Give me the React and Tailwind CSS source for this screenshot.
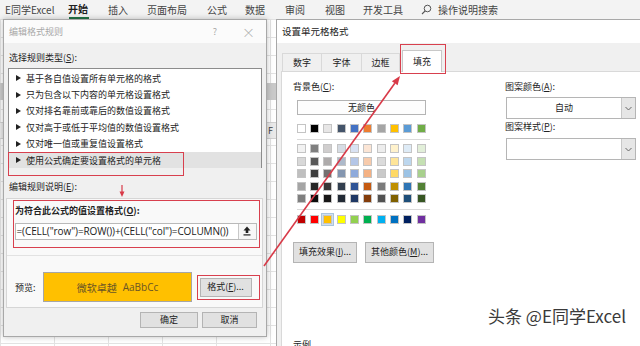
import React from 'react';

const themeRow = ['bg-[#ffffff]', 'bg-[#000000]', 'bg-[#e7e6e6]', 'bg-[#44546a]', 'bg-[#4472c4]', 'bg-[#ed7d31]', 'bg-[#a5a5a5]', 'bg-[#ffc000]', 'bg-[#5b9bd5]', 'bg-[#70ad47]'];

const tintRows = [
  ['bg-[#f2f2f2]', 'bg-[#7f7f7f]', 'bg-[#d0cece]', 'bg-[#d6dce4]', 'bg-[#d9e2f3]', 'bg-[#fbe5d5]', 'bg-[#ededed]', 'bg-[#fff2cc]', 'bg-[#deebf6]', 'bg-[#e2efd9]'],
  ['bg-[#d8d8d8]', 'bg-[#595959]', 'bg-[#aeabab]', 'bg-[#adb9ca]', 'bg-[#b4c6e7]', 'bg-[#f7cbac]', 'bg-[#dbdbdb]', 'bg-[#fee599]', 'bg-[#bdd7ee]', 'bg-[#c5e0b3]'],
  ['bg-[#bfbfbf]', 'bg-[#3f3f3f]', 'bg-[#757070]', 'bg-[#8496b0]', 'bg-[#8eaadb]', 'bg-[#f4b183]', 'bg-[#c9c9c9]', 'bg-[#ffd965]', 'bg-[#9cc3e5]', 'bg-[#a8d08d]'],
  ['bg-[#a5a5a5]', 'bg-[#262626]', 'bg-[#3a3838]', 'bg-[#323f4f]', 'bg-[#2f5496]', 'bg-[#c55a11]', 'bg-[#7b7b7b]', 'bg-[#bf8f00]', 'bg-[#2e75b5]', 'bg-[#538135]'],
  ['bg-[#7f7f7f]', 'bg-[#0c0c0c]', 'bg-[#171616]', 'bg-[#222a35]', 'bg-[#1f3864]', 'bg-[#833c0b]', 'bg-[#525252]', 'bg-[#7f6000]', 'bg-[#1e4e79]', 'bg-[#375623]'],
];

const standardRow = ['bg-[#c00000]', 'bg-[#ff0000]', 'bg-[#ffc000]', 'bg-[#ffff00]', 'bg-[#92d050]', 'bg-[#00b050]', 'bg-[#00b0f0]', 'bg-[#0070c0]', 'bg-[#002060]', 'bg-[#7030a0]'];

const rules = [
  '基于各自值设置所有单元格的格式',
  '只为包含以下内容的单元格设置格式',
  '仅对排名靠前或靠后的数值设置格式',
  '仅对高于或低于平均值的数值设置格式',
  '仅对唯一值或重复值设置格式',
  '使用公式确定要设置格式的单元格',
];

const ribbonTabs = [
  { label: 'E同学Excel', w: 'w-[68px] pl-[5px]' },
  { label: '开始', w: 'w-[40px]', active: true },
  { label: '插入', w: 'w-[39px]' },
  { label: '页面布局', w: 'w-[60px]' },
  { label: '公式', w: 'w-[38px]' },
  { label: '数据', w: 'w-[40px]' },
  { label: '审阅', w: 'w-[40px]' },
  { label: '视图', w: 'w-[38px]' },
  { label: '开发工具', w: 'w-[58px]' },
];

const Swatch = ({ color, selected }) => (
  <div className={`w-[13.33px] h-[13px] flex items-center justify-center ${selected ? 'bg-[#cfe0f0] border border-[#a9c4de]' : ''}`}>
    <div className={`w-[9px] h-[9px] border border-[#c4c4c4] ${color}`} />
  </div>
);

const SwatchRow = ({ colors, selectedIndex }) => (
  <div className="flex">
    {colors.map((c, i) => (
      <Swatch key={i} color={c} selected={i === selectedIndex} />
    ))}
  </div>
);

const Triangle = () => (
  <svg width="5" height="6" viewBox="0 0 5 6" className="shrink-0">
    <path d="M0 0 L5 3 L0 6 Z" fill="#222" />
  </svg>
);

const Chevron = () => (
  <svg width="7" height="5" viewBox="0 0 7 5">
    <path d="M0.5 1 L3.5 4 L6.5 1" fill="none" stroke="#666" strokeWidth="1" />
  </svg>
);

const Dropdown = ({ value }) => (
  <div className="w-[130px] h-[22px] bg-white border border-[#b5b5b5] flex">
    <div className="flex-1 flex items-center justify-center text-[9px] text-[#222]">{value}</div>
    <div className="w-[14px] bg-[#e6e6e6] border-l border-[#c8c8c8] flex items-center justify-center">
      <Chevron />
    </div>
  </div>
);

const Btn = ({ className, children }) => (
  <div className={`bg-[#e1e1e1] border border-[#b4b4b4] flex items-center justify-center text-[9px] text-[#222] ${className}`}>
    {children}
  </div>
);

function LeftDialog() {
  return (
    <div className="absolute left-[3px] top-[19px] w-[264px] h-[318px] bg-[#f0f0f0] border border-[#a8a8a8] shadow-[0_0_6px_rgba(0,0,0,0.25)] flex flex-col">
      {/* title bar */}
      <div className="h-[23px] bg-[#fbfbfb] flex items-center text-[9px] text-[#a8a8a8] shrink-0">
        <span className="pl-[5px]">编辑格式规则</span>
        <span className="ml-auto w-[10px] text-center">?</span>
        <span className="ml-[22px] mr-[12px] w-[12px] text-center text-[13px] leading-none font-light">×</span>
      </div>

      <div className="flex flex-col text-[9px] text-[#222]">
        <div className="mt-[9px] ml-[5px] leading-[12px]">选择规则类型(<u>S</u>):</div>

        <div className="mt-[4px] ml-[4px] w-[254px] h-[100px] bg-white border border-[#8c8c8c] pt-[1px]">
          {rules.map((r, i) => (
            <div key={r} className={`h-[16.4px] flex items-center pl-[7px] ${i === rules.length - 1 ? 'bg-[#e2e2e2]' : ''}`}>
              <Triangle />
              <span className="ml-[5px] leading-none">{r}</span>
            </div>
          ))}
        </div>

        <div className="mt-[13px] ml-[5px] leading-[12px]">编辑规则说明(<u>E</u>):</div>

        <div className="mt-[5px] ml-[2px] w-[257px] h-[110px] bg-[#f9f9f9] border border-[#d6d6d6] flex flex-col">
          <div className="mt-[1px] ml-[6px] w-[247px] h-[48px] border-[1.5px] border-[#d8404e] flex flex-col">
            <div className="pt-[3.5px] pl-[1px] leading-[12px] font-bold">为符合此公式的值设置格式(<u>O</u>):</div>
            <div className="mt-[6px] ml-[0.5px] w-[242px] h-[17px] bg-white border border-[#b9b9b9] flex">
              <div className="flex-1 flex items-center pl-[1px] text-[10px] text-[#222] font-['Open_Sans',sans-serif] tracking-[-0.1px] whitespace-nowrap overflow-hidden">
                =(CELL("row")=ROW())+(CELL("col")=COLUMN())
              </div>
              <div className="w-[18px] border-l border-[#c8c8c8] bg-[#f7f7f7] flex items-center justify-center">
                <svg width="8" height="10" viewBox="0 0 8 10">
                  <path d="M4 0.5 L7.5 4.5 H5.3 V7 H2.7 V4.5 H0.5 Z" fill="#222" />
                  <rect x="0.5" y="8.3" width="7" height="1.2" fill="#222" />
                </svg>
              </div>
            </div>
          </div>

          <div className="mt-[7px] h-px bg-[#e2e2e2]" />

          <div className="mt-[16px] flex items-center pl-[8px]">
            <span className="w-[28px] leading-none">预览:</span>
            <div className="w-[149px] h-[30px] bg-[#ffc000] border border-[#a6a6a6] flex items-center justify-center text-[10px] text-[#6a5526]">
              <span>微软卓越</span>
              <span className="ml-[6px] font-['Open_Sans',sans-serif]">AaBbCc</span>
            </div>
            <div className="ml-[5px] w-[63px] h-[25px] border-[1.5px] border-[#d8404e] flex items-center pl-[1.5px]">
              <Btn className="w-[52px] h-[19px]">格式(<u>F</u>)...</Btn>
            </div>
          </div>
        </div>

        <div className="mt-[4px] flex justify-end gap-[4px] pr-[9px]">
          <Btn className="w-[58px] h-[16px]">确定</Btn>
          <Btn className="w-[55px] h-[16px]">取消</Btn>
        </div>
      </div>
    </div>
  );
}

function RightDialog() {
  return (
    <div className="absolute left-[276px] top-[19px] w-[370px] h-[340px] bg-[#f0f0f0] border-l border-t border-[#a8a8a8] flex flex-col text-[9px] text-[#222]">
      <div className="h-[23px] bg-white flex items-center pl-[5px] shrink-0 text-[9.5px]">设置单元格格式</div>

      {/* tabs */}
      <div className="h-[28px] flex items-end pl-[5px] shrink-0">
        <div className="w-[39px] h-[18px] border-t border-l border-[#d9d9d9] flex items-center justify-center">数字</div>
        <div className="w-[40px] h-[18px] border-t border-l border-[#d9d9d9] flex items-center justify-center">字体</div>
        <div className="w-[39px] h-[18px] border-t border-l border-r border-[#d9d9d9] flex items-center justify-center">边框</div>
        <div className="ml-[2px] w-[40px] h-[22px] mb-[-1px] relative z-10 bg-white border-t border-l border-r border-[#c8c8c8] flex items-center justify-center">填充</div>
      </div>

      {/* panel */}
      <div className="ml-[4px] flex-1 bg-white border border-[#d9d9d9] flex">
        <div className="w-[223px] pl-[11px] flex flex-col">
          <div className="pt-[9px] leading-[12px]">背景色(<u>C</u>):</div>
          <div className="mt-[7px] ml-[4px] w-[129px] h-[15px] bg-[#fdfdfd] border border-[#b4b4b4] flex items-center justify-center">无颜色</div>

          <div className="mt-[6.5px] ml-[1.5px]">
            <SwatchRow colors={themeRow} />
          </div>
          <div className="mt-[4.5px] ml-[4px] w-[133px] h-px bg-[#dadada]" />
          <div className="mt-[2.5px] ml-[1.5px] flex flex-col">
            {tintRows.map((row, i) => (
              <div key={i} className="h-[12.5px] flex items-center">
                <SwatchRow colors={row} />
              </div>
            ))}
          </div>
          <div className="mt-[3.5px] ml-[4px] w-[133px] h-px bg-[#dadada]" />
          <div className="mt-[3.5px] ml-[1.5px]">
            <SwatchRow colors={standardRow} selectedIndex={2} />
          </div>

          <div className="mt-[15.5px] flex gap-[8px]">
            <Btn className="w-[64px] h-[21px]">填充效果(<u>I</u>)...</Btn>
            <Btn className="w-[69px] h-[21px]">其他颜色(<u>M</u>)...</Btn>
          </div>

          <div className="mt-[76px] leading-[12px]">示例</div>
        </div>

        <div className="flex flex-col">
          <div className="pt-[9px] leading-[12px]">图案颜色(<u>A</u>):</div>
          <div className="mt-[4px] ml-[1px]">
            <Dropdown value="自动" />
          </div>
          <div className="mt-[2px] leading-[12px]">图案样式(<u>P</u>):</div>
          <div className="mt-[5px] ml-[1px]">
            <Dropdown value="" />
          </div>
        </div>
      </div>
    </div>
  );
}

export default function App() {
  return (
    <div className="w-[640px] h-[346px] relative overflow-hidden bg-white font-['Noto_Sans_CJK_SC',sans-serif]">
      {/* ribbon tabs */}
      <div className="h-[19px] bg-[#f3f3f3] flex items-center text-[10px] text-[#444] whitespace-nowrap">
        {ribbonTabs.map((t) => (
          <div key={t.label} className={`${t.w} h-full flex flex-col justify-center`}>
            {t.active ? (
              <div className="flex flex-col items-start">
                <span className="font-bold text-[#222] leading-[12px] pt-[2px]">{t.label}</span>
                <div className="mt-[2px] ml-[1px] w-[20px] h-[2px] bg-[#217346]" />
              </div>
            ) : (
              <span className="leading-[12px]">{t.label}</span>
            )}
          </div>
        ))}
        <div className="w-[17px] flex items-center">
          <svg width="11" height="11" viewBox="0 0 11 11">
            <circle cx="6.5" cy="4.5" r="3.3" fill="none" stroke="#555" strokeWidth="1" />
            <path d="M4.2 6.8 L1 10" stroke="#555" strokeWidth="1.1" />
          </svg>
        </div>
        <span className="leading-[12px]">操作说明搜索</span>
      </div>

      {/* spreadsheet behind the dialogs */}
      <div className="h-[327px] bg-[image:linear-gradient(#e3e3e3_1px,transparent_1px),linear-gradient(90deg,#e3e3e3_1px,transparent_1px)] bg-[length:54px_18px] flex flex-col">
        <div className="h-[64px]" />
        <div className="h-[17px] bg-[#c9c9c9]" />
        <div className="h-[22px]" />
        <div className="h-[17px] bg-[#e9e9e9] border-y border-[#d0d0d0] flex items-center pl-[268px] text-[9px] text-[#444]">F</div>
      </div>

      <LeftDialog />
      <RightDialog />

      {/* annotations */}
      <div className="absolute left-[8px] top-[152px] w-[176px] h-[24px] border-[1.5px] border-[#d8404e]" />
      <div className="absolute left-[400px] top-[44px] w-[46px] h-[30px] border-[1.5px] border-[#d8404e]" />

      <svg className="absolute inset-0 pointer-events-none" width="640" height="346" viewBox="0 0 640 346">
        <line x1="264" y1="266" x2="394.8" y2="83.3" stroke="#d83a48" strokeWidth="1.6" />
        <polygon points="400,76 397.6,85.3 391.9,81.3" fill="#d83a48" />
        <line x1="122" y1="185" x2="122" y2="192" stroke="#d83a48" strokeWidth="1.2" />
        <polygon points="119.5,191.5 124.5,191.5 122,197" fill="#d83a48" />
      </svg>

      <div className="absolute left-[488px] top-[305px] text-[17px] text-[#3a3a3a] leading-[22px] whitespace-nowrap [text-shadow:0_0_2px_#fff,0_0_2px_#fff]">
        头条 @E同学Excel
      </div>
    </div>
  );
}
